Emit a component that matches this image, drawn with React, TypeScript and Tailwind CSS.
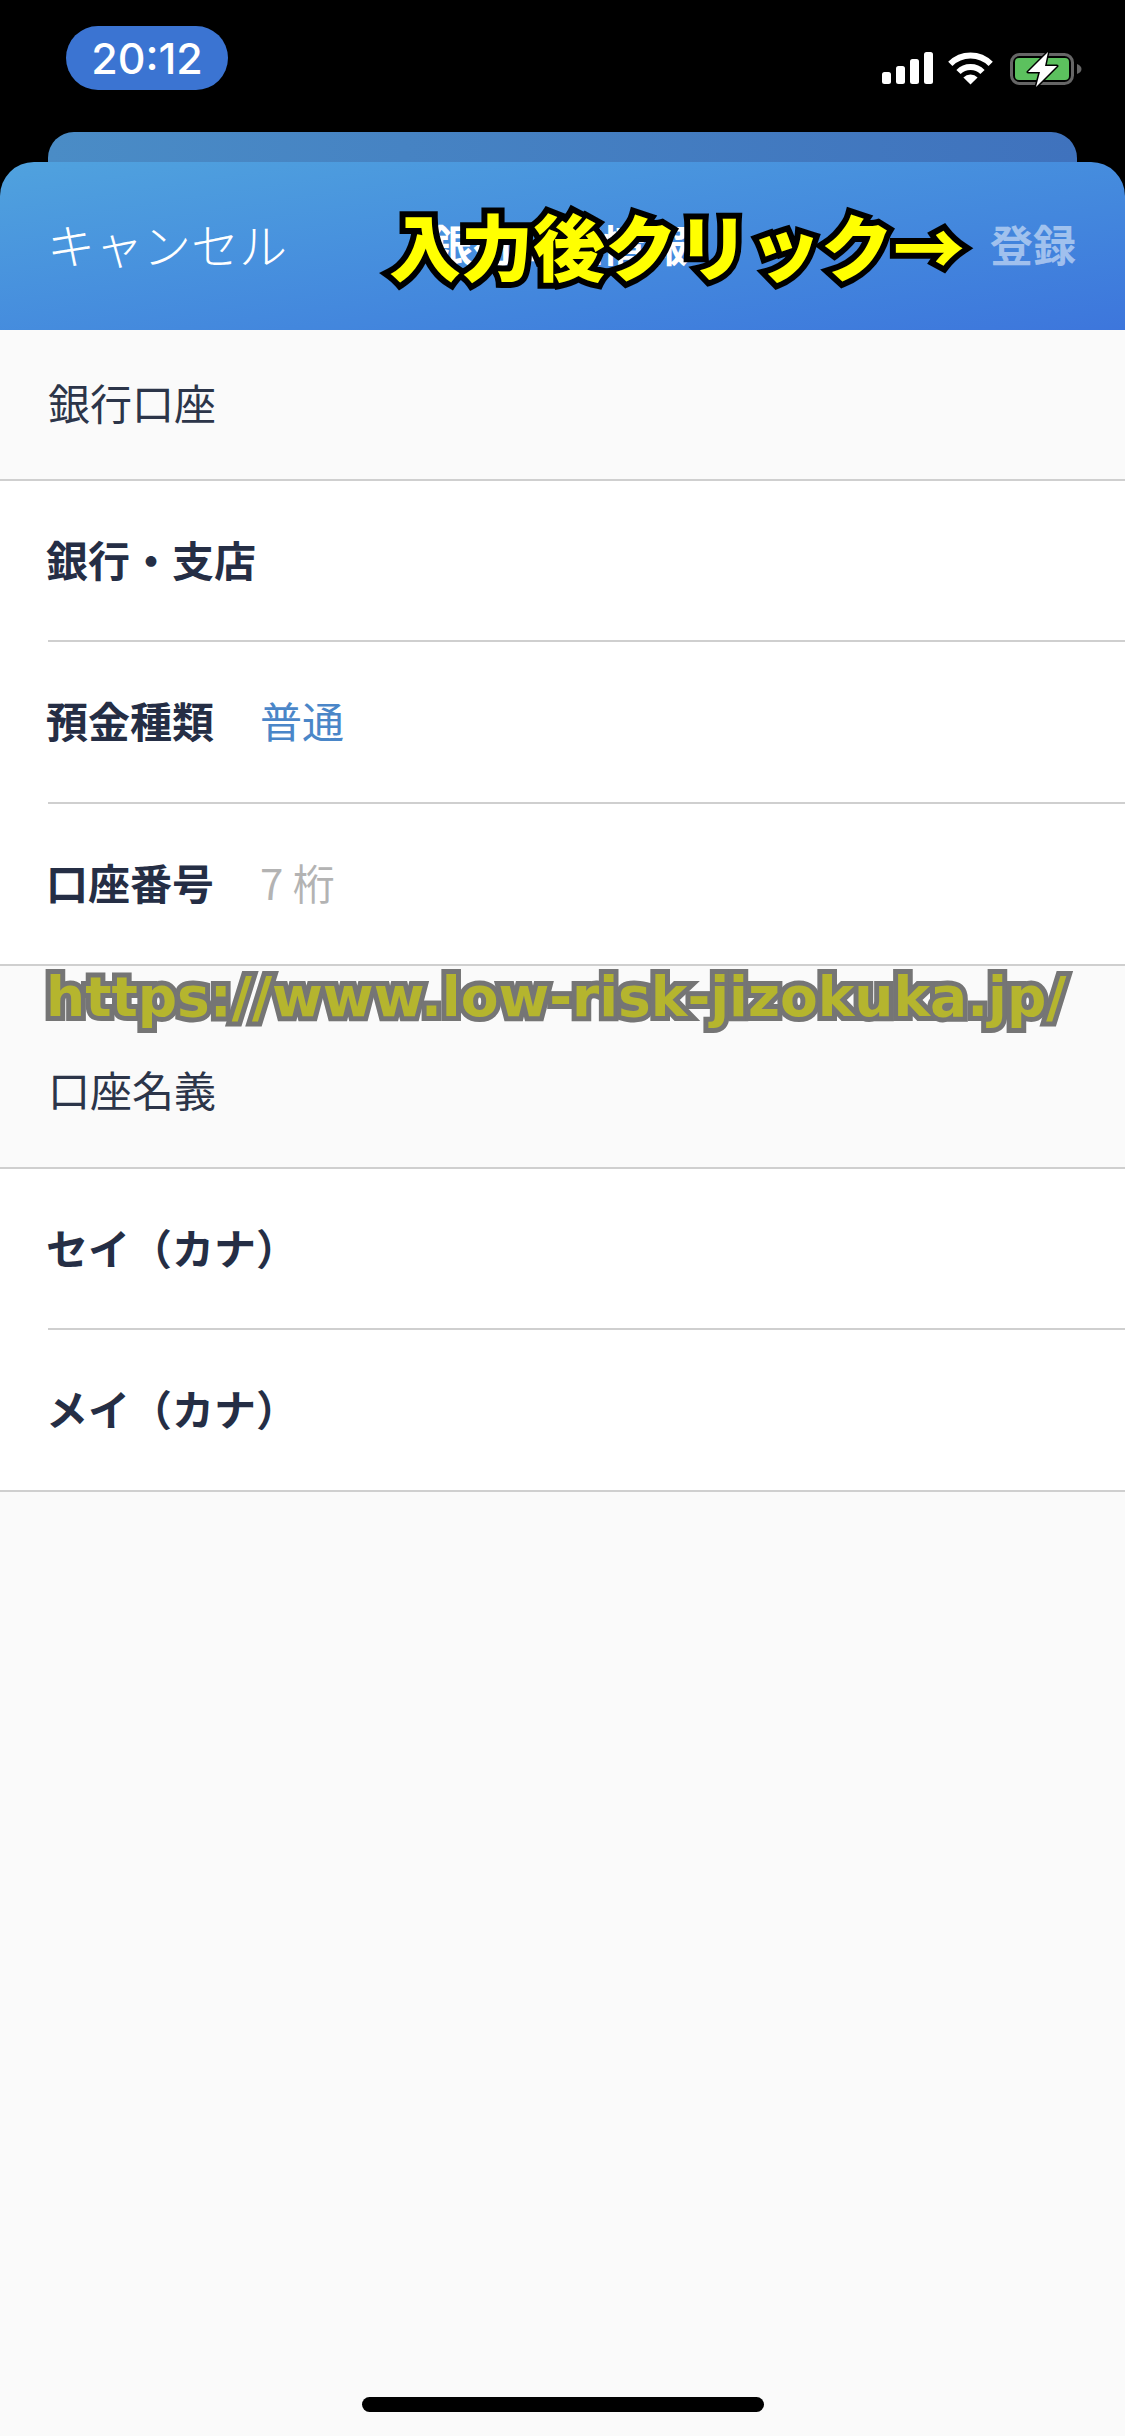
import React from "react";

const CJK = "font-['Noto_Sans_CJK_JP','Noto_Sans',sans-serif]";

function Signal() {
  return (
    <svg width="51" height="32" viewBox="0 0 51 32" fill="#fff">
      <rect x="0" y="20" width="9" height="12" rx="2.5" />
      <rect x="14" y="14" width="9" height="18" rx="2.5" />
      <rect x="28" y="7" width="9" height="25" rx="2.5" />
      <rect x="42" y="0" width="9" height="32" rx="2.5" />
    </svg>
  );
}

function Wifi() {
  return (
    <svg width="45" height="33" viewBox="0 0 45 33" fill="none">
      <path d="M2.3 11.8A28.5 28.5 0 0 1 42.7 11.8" stroke="#fff" strokeWidth="6" />
      <path d="M10.5 20A17 17 0 0 1 34.5 20" stroke="#fff" strokeWidth="6" />
      <path d="M22.5 32.5L15.4 25.4A10 10 0 0 1 29.6 25.4Z" fill="#fff" />
    </svg>
  );
}

function Battery() {
  return (
    <svg width="72" height="38" viewBox="0 -3 72 38">
      <rect x="1.5" y="1.5" width="61" height="29" rx="8" fill="none" stroke="#666" strokeWidth="3" />
      <rect x="5" y="5" width="54" height="22" rx="4" fill="#5cc15e" />
      <path d="M67 11C70 12 71.5 14 71.5 16C71.5 18 70 20 67 21Z" fill="#666" />
      <path d="M38 -1L18 19H30L26 34L47 13H35Z" fill="#fff" stroke="#000" strokeWidth="3" strokeLinejoin="round" paintOrder="stroke" />
    </svg>
  );
}

function SectionLabel({ children }: { children: React.ReactNode }) {
  return <span className="pb-[5px] pl-[48px] text-[42px] leading-none text-[#2c3549]">{children}</span>;
}

function Row({ label, value, valueClass, heightClass, last }: { label: string; value?: string; valueClass?: string; heightClass: string; last?: boolean }) {
  return (
    <div className={last ? "bg-white" : "bg-white pl-[48px]"}>
      <div className={"flex items-center border-b-2 border-[#cfcfcf] " + heightClass + (last ? " pl-[48px]" : "")}>
        <span className="-ml-[2px] mb-[4px] w-[215px] shrink-0 whitespace-nowrap text-[42px] font-bold leading-none text-[#252e45]">{label}</span>
        {value ? <span className={"mb-[4px] -ml-[1px] whitespace-nowrap text-[42px] leading-none " + valueClass}>{value}</span> : null}
      </div>
    </div>
  );
}

export default function App() {
  return (
    <div className={"relative flex h-[2436px] w-[1125px] flex-col overflow-hidden bg-black " + CJK}>
      <div className="flex h-[132px] shrink-0 items-start justify-between pl-[66px] pr-[43px]">
        <div className="mt-[26px] flex h-[64px] w-[162px] items-center justify-center rounded-[32px] bg-[#3b74d2] font-['Inter',sans-serif] text-[43px] font-medium leading-none text-white">
          20:12
        </div>
        <div className="mt-[52px] flex items-start gap-[15px]">
          <Signal />
          <Wifi />
          <div className="-mt-[2px] ml-[2px]">
            <Battery />
          </div>
        </div>
      </div>

      <div className="mx-[48px] h-[30px] shrink-0 rounded-t-[26px] bg-gradient-to-r from-[#4a8cc6] to-[#3f72bd]" />

      <div className="relative flex h-[168px] shrink-0 items-center justify-between rounded-t-[34px] bg-gradient-to-br from-[#50a2de] to-[#3d76dc] pl-[47px] pr-[49px]">
        <span className="mb-[6px] text-[48px] font-light leading-none text-white">キャンセル</span>
        <span className="absolute left-[430px] top-[60px] text-[43px] font-bold leading-none text-white">銀行口座情報</span>
        <span className="mb-[6px] text-[43px] font-bold leading-none text-white/50">登録</span>
        <span className="absolute left-[389px] top-[46px] whitespace-nowrap text-[72px] font-black leading-none text-[#ffff00] [-webkit-text-stroke:12px_#000] [paint-order:stroke_fill]">
          入力後クリック→
        </span>
      </div>

      <div className="flex h-[151px] shrink-0 items-center border-b-2 border-[#cfcfcf] bg-[#fafafa]">
        <SectionLabel>銀行口座</SectionLabel>
      </div>
      <Row label="銀行・支店" heightClass="h-[161px]" />
      <Row label="預金種類" value="普通" valueClass="text-[#4a86c8]" heightClass="h-[162px]" />
      <Row label="口座番号" value="7 桁" valueClass="text-[#b3b3b3]" heightClass="h-[162px]" last />

      <div className="flex h-[203px] shrink-0 items-center border-b-2 border-[#cfcfcf] bg-[#fafafa] pt-[50px]">
        <SectionLabel>口座名義</SectionLabel>
      </div>
      <Row label="セイ（カナ）" heightClass="h-[161px]" />
      <Row label="メイ（カナ）" heightClass="h-[162px]" last />

      <div className="flex flex-1 flex-col items-center justify-end bg-[#fafafa] pb-[24px]">
        <div className="h-[15px] w-[402px] rounded-full bg-black" />
      </div>

      <span className="absolute left-[46px] top-[970px] whitespace-nowrap font-['DejaVu_Sans',sans-serif] text-[55px] font-bold leading-none text-[#b5b52e] [-webkit-text-stroke:10px_#757575] [paint-order:stroke_fill]">
        https://www.low-risk-jizokuka.jp/
      </span>
    </div>
  );
}
